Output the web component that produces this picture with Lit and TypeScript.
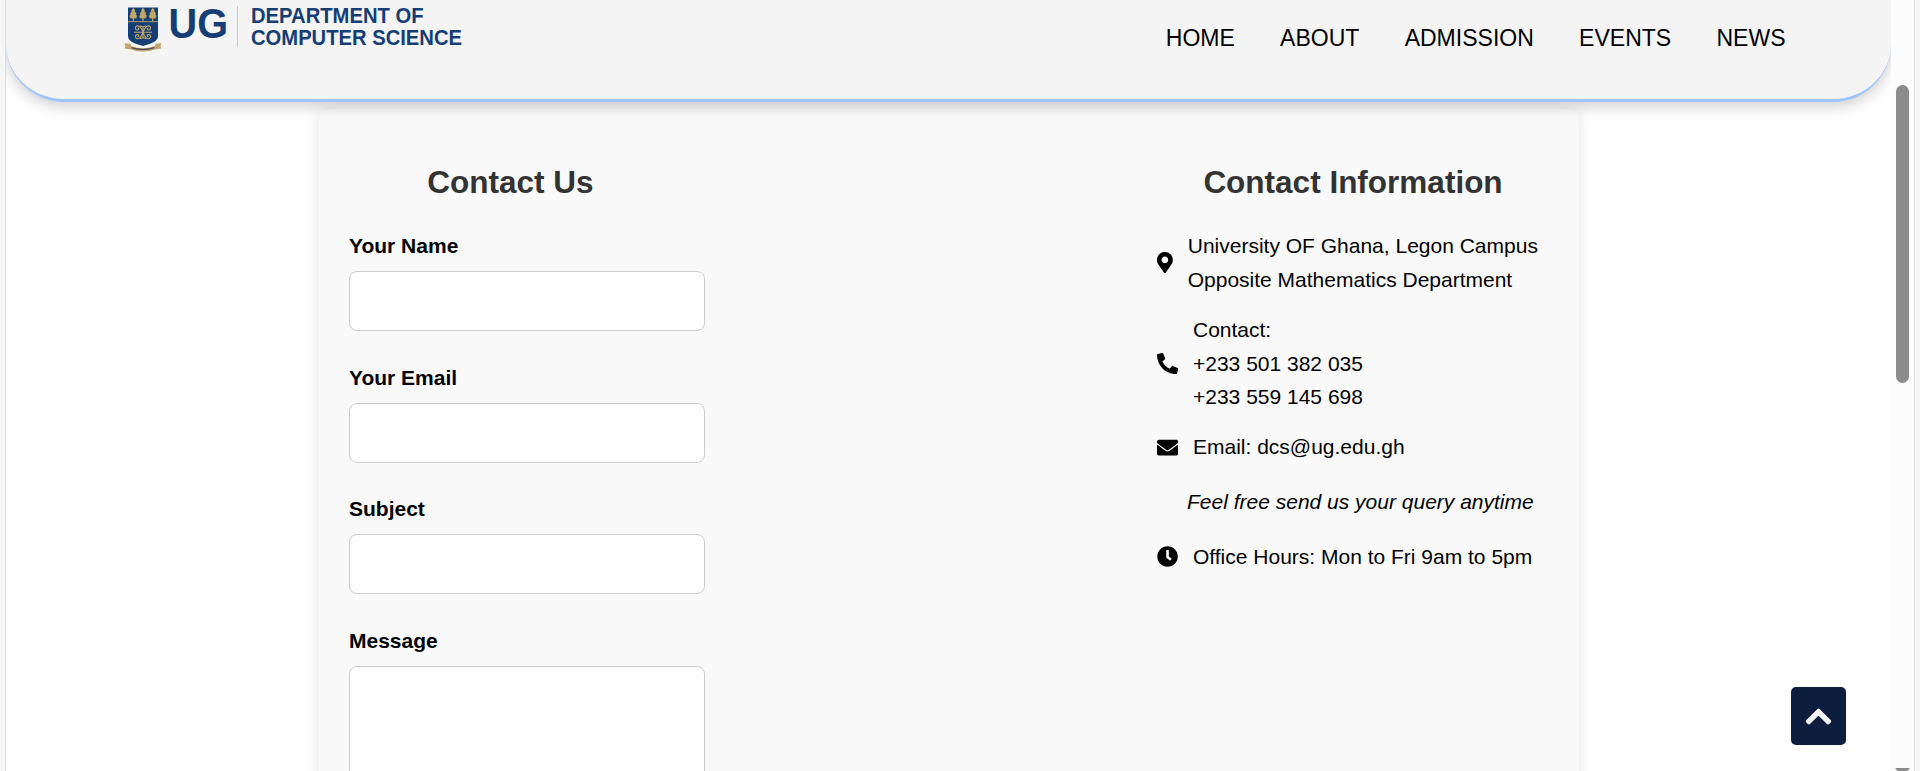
import { LitElement, html, svg, css } from "lit";
import { customElement } from "lit/decorators.js";

const NAV = ["HOME", "ABOUT", "ADMISSION", "EVENTS", "NEWS"];
const FIELDS = ["Your Name", "Your Email", "Subject"];

const ICONS = {
  pin: {
    w: 384,
    d: "M172.268 501.67C26.97 291.031 0 269.413 0 192 0 85.961 85.961 0 192 0s192 85.961 192 192c0 77.413-26.97 99.031-172.268 309.67-9.535 13.774-29.93 13.773-39.464 0zM192 272c44.183 0 80-35.817 80-80s-35.817-80-80-80-80 35.817-80 80 35.817 80 80 80z",
  },
  phone: {
    w: 512,
    d: "M497.39 361.8l-112-48a24 24 0 0 0-28 6.9l-49.6 60.6A370.66 370.66 0 0 1 130.6 204.11l60.6-49.6a23.94 23.94 0 0 0 6.9-28l-48-112A24.16 24.16 0 0 0 122.6.61l-104 24A24 24 0 0 0 0 48c0 256.5 207.9 464 464 464a24 24 0 0 0 23.4-18.6l24-104a24.29 24.29 0 0 0-14.01-27.6z",
  },
  mail: {
    w: 512,
    d: "M502.3 190.8c3.9-3.1 9.7-.2 9.7 4.7V400c0 26.5-21.5 48-48 48H48c-26.5 0-48-21.5-48-48V195.6c0-5 5.7-7.8 9.7-4.7 22.4 17.4 52.1 39.5 154.1 113.6 21.1 15.4 56.7 47.8 92.2 47.6 35.7.3 72-32.8 92.3-47.6 102-74.1 131.6-96.3 154-113.7zM256 320c23.2.4 56.6-29.2 73.4-41.4 132.7-96.3 142.8-104.7 173.4-128.7 5.8-4.5 9.2-11.5 9.2-18.9v-19c0-26.5-21.5-48-48-48H48c-26.5 0-48 21.5-48 48v19c0 7.4 3.4 14.3 9.2 18.9 30.6 23.9 40.7 32.4 173.4 128.7 16.8 12.2 50.2 41.8 73.4 41.4z",
  },
  clock: {
    w: 512,
    d: "M256,8C119,8,8,119,8,256S119,504,256,504,504,393,504,256,393,8,256,8Zm92.49,313h0l-20,25a16,16,0,0,1-22.49,2.5h0l-67-49.72a40,40,0,0,1-15-31.23V112a16,16,0,0,1,16-16h32a16,16,0,0,1,16,16V256l58,42.5A16,16,0,0,1,348.49,321Z",
  },
};

const icon = (name: keyof typeof ICONS) => html`
  <svg class=${"icon " + name} viewBox="0 0 ${ICONS[name].w} 512">
    <path d=${ICONS[name].d}></path>
  </svg>
`;

@customElement("ug-logo")
class UgLogo extends LitElement {
  static styles = css`
    :host { display: block; }
    svg { display: block; overflow: visible; font-family: "Liberation Sans", Arial, sans-serif; font-weight: 700; }
    .navy { fill: #153e75; }
    .gold { fill: #c3a566; }
    .line { fill: none; stroke: #c3a566; stroke-width: 1.1; }
  `;
  render() {
    const tree = (x: number) => svg`
      <path class="gold" d="M${x} 7.800l2 2.700-.7.500 2 2.400-.8.600 1.600 2.500-1.200.300.600 1.400-2.900.400v3h-1.200v-3l-2.900-.400.600-1.400-1.200-.300 1.600-2.500-.8-.600 2-2.400-.7-.500z"></path>`;
    return html`
      <svg width="360" height="60" viewBox="0 0 360 60">
        <path class="navy" d="M4 7.500H34V36C34 41.500 27 43.500 19 46C11 43.500 4 41.500 4 36Z"></path>
        ${[9.3, 19, 28.7].map(tree)}
        <rect class="gold" x="4" y="21.300" width="30" height=".9"></rect>
        <g class="line">
          <path d="M10 32.300H28M19 26V38.500"></path>
          <path d="M19 32.300C17 27 15.500 25.500 13.300 25.900C10.500 26.500 11 30.300 13.500 30C15.200 29.700 15 27.700 13.600 28.100"></path>
          <path d="M19 32.300C21 27 22.500 25.500 24.700 25.900C27.500 26.500 27 30.300 24.500 30C22.800 29.700 23 27.700 24.400 28.100"></path>
          <path d="M19 32.300C17 37.600 15.500 39.100 13.300 38.700C10.500 38.100 11 34.300 13.500 34.600C15.200 34.900 15 36.900 13.600 36.500"></path>
          <path d="M19 32.300C21 37.600 22.500 39.100 24.700 38.700C27.500 38.100 27 34.300 24.500 34.600C22.800 34.900 23 36.900 24.400 36.500"></path>
          <path d="M16 25.800Q19 27.800 22 25.800M16 38.800Q19 36.800 22 38.800"></path>
        </g>
        <path class="gold" d="M.5 43.200L6.500 43.800 7 46Q19 50.500 31 46L31.500 43.800 37.500 43.200 36.500 46.300 37.300 48.500 32 49.200Q19 54 6 49.200L.7 48.500 1.500 46.300Z"></path>
        <path d="M7.500 47.600Q19 51.200 30.500 47.600" fill="none" stroke="#4d5560" stroke-width="1.500"></path>
        <text class="navy" x="44.500" y="38" font-size="42" textLength="59.500" lengthAdjust="spacingAndGlyphs">UG</text>
        <rect x="113" y="6" width="1" height="41" fill="#d6c7a8"></rect>
        <text class="navy" x="127" y="23" font-size="21.500" textLength="172.500" lengthAdjust="spacingAndGlyphs">DEPARTMENT OF</text>
        <text class="navy" x="127" y="44.800" font-size="21.500" textLength="211" lengthAdjust="spacingAndGlyphs">COMPUTER SCIENCE</text>
      </svg>
    `;
  }
}

@customElement("app-root")
class AppRoot extends LitElement {
  static styles = css`
    * { box-sizing: border-box; }
    :host {
      display: block;
      height: 771px;
      overflow: hidden;
      background: #f6f6f6;
      color: #000;
      font: 21px/33.8px "Liberation Sans", Arial, sans-serif;
    }
    .frame {
      display: grid;
      grid-template-columns: 1885px 23px;
      width: 1910px;
      height: 771px;
      margin-left: 5px;
      border: 1px solid #dcdcdc;
      border-width: 0 1px;
      background: #fff;
    }
    .page { height: 771px; overflow: hidden; position: relative; }
    .header {
      position: relative;
      z-index: 1;
      display: flex;
      justify-content: space-between;
      height: 102px;
      padding: 0 105.500px 0 118px;
      background: #f4f4f4;
      border-bottom: 3px solid #9fc5ff;
      border-radius: 0 0 58px 58px;
      box-shadow: 0 4px 15px rgba(0, 0, 0, 0.2);
    }
    .nav {
      display: flex;
      gap: 45.200px;
      margin-top: 22px;
      font-size: 23.040px;
    }
    .card {
      display: flex;
      justify-content: space-between;
      width: 1260px;
      height: 760px;
      margin: 7px 0 0 313px;
      padding: 48px 30px 0;
      background: #f9f9f9;
      border-radius: 8px;
      box-shadow: 0 0 16px rgba(0, 0, 0, 0.1);
    }
    .form { width: 356px; }
    h2 {
      margin: 0;
      padding-bottom: 21px;
      font-size: 31.500px;
      line-height: 51px;
      color: #333;
      text-align: center;
    }
    .form h2 { width: 323px; }
    .label { display: block; font-weight: 700; line-height: 34px; }
    .field { height: 131.700px; }
    .input {
      display: block;
      width: 356px;
      height: 60px;
      margin-top: 8px;
      border: 1px solid #ccc;
      border-radius: 8px;
      background: #fff;
      outline: none;
      resize: none;
    }
    .area { height: 200px; }
    .info { width: 392px; }
    .row { display: flex; align-items: center; gap: 14.900px; margin-bottom: 16.200px; white-space: nowrap; }
    .note { margin: 21px 0; padding-left: 30px; font-style: italic; white-space: nowrap; }
    .icon { display: block; flex: none; width: 21.120px; height: 21.120px; fill: #000; }
    .pin { width: 15.840px; }
    .top {
      position: absolute;
      right: 45px;
      bottom: 26px;
      display: flex;
      align-items: center;
      justify-content: center;
      width: 55px;
      height: 58px;
      padding: 0;
      border: 0;
      border-radius: 5px;
      background: #0d1d3e;
    }
    .chevron { display: block; overflow: visible; fill: #f4f4f4; stroke: #f4f4f4; stroke-width: 18; }
    .scroll { background: #fcfcfc; padding: 85px 5px 0; height: 771px; display: flex; flex-direction: column; justify-content: space-between; overflow: hidden; }
    .thumb { height: 298px; width: 13px; border-radius: 7px; background: #8b8b8b; }
    .arrow { display: block; width: 15px; height: 3px; margin-left: -1px; }
  `;

  render() {
    return html`
      <div class="frame">
        <div class="page">
          <header class="header">
            <ug-logo></ug-logo>
            <nav class="nav">${NAV.map((n) => html`<span>${n}</span>`)}</nav>
          </header>
          <main class="card">
            <form class="form">
              <h2>Contact Us</h2>
              ${FIELDS.map(
                (f) => html`<div class="field">
                  <label class="label">${f}</label><input class="input" />
                </div>`
              )}
              <label class="label">Message</label>
              <textarea class="input area"></textarea>
            </form>
            <section class="info">
              <h2>Contact Information</h2>
              <div class="row">${icon("pin")}<div>University OF Ghana, Legon Campus<br />Opposite Mathematics Department</div></div>
              <div class="row">${icon("phone")}<div>Contact:<br />+233 501 382 035<br />+233 559 145 698</div></div>
              <div class="row">${icon("mail")}<div>Email: dcs@ug.edu.gh</div></div>
              <div class="note">Feel free send us your query anytime</div>
              <div class="row">${icon("clock")}<div>Office Hours: Mon to Fri 9am to 5pm</div></div>
            </section>
          </main>
          <button class="top" aria-label="Back to top">
            <svg class="chevron" width="25" height="29" viewBox="0 0 448 512">
              <path d="M240.971 130.524l194.343 194.343c9.373 9.373 9.373 24.569 0 33.941l-22.667 22.667c-9.357 9.357-24.522 9.375-33.901.04L224 227.495 69.255 381.516c-9.379 9.335-24.544 9.317-33.901-.04l-22.667-22.667c-9.373-9.373-9.373-24.569 0-33.941L207.03 130.525c9.372-9.373 24.568-9.373 33.941-.001z"></path>
            </svg>
          </button>
        </div>
        <div class="scroll">
          <div class="thumb"></div>
          <svg class="arrow" viewBox="0 0 15 3"><path d="M0 0H15L12.500 3H2.500Z" fill="#8b8b8b"></path></svg>
        </div>
      </div>
    `;
  }
}
